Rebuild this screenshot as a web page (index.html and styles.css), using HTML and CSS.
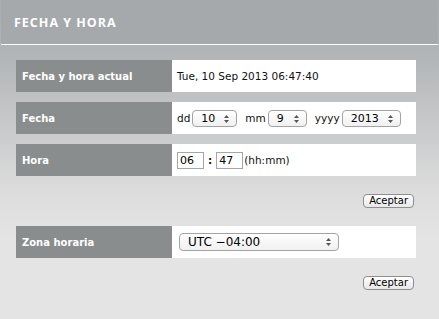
FILE: index.html
```html
<!DOCTYPE html>
<html lang="es">
<head>
    <meta charset="UTF-8">
    <title>Fecha y hora</title>
    <link rel="stylesheet" href="styles.css">
</head>
<body>
    <div class="panel">
        <h1 class="title">FECHA Y HORA</h1>
        <div class="content">
            <div class="row">
                <div class="label">Fecha y hora actual</div>
                <div class="value">Tue, 10 Sep 2013 06:47:40</div>
            </div>
            <div class="row">
                <div class="label">Fecha</div>
                <div class="value">
                    <span class="unit">dd</span>
                    <span class="select-wrap sel-dd">
                        <select><option>10</option></select>
                        <svg class="arrows" width="5" height="8" viewBox="0 0 5 8"><path d="M0 3 L2.5 0 L5 3 Z M0 5 L2.5 8 L5 5 Z" fill="#555"/></svg>
                    </span>
                    <span class="unit">mm</span>
                    <span class="select-wrap sel-mm">
                        <select><option>9</option></select>
                        <svg class="arrows" width="5" height="8" viewBox="0 0 5 8"><path d="M0 3 L2.5 0 L5 3 Z M0 5 L2.5 8 L5 5 Z" fill="#555"/></svg>
                    </span>
                    <span class="unit">yyyy</span>
                    <span class="select-wrap sel-yy">
                        <select><option>2013</option></select>
                        <svg class="arrows" width="5" height="8" viewBox="0 0 5 8"><path d="M0 3 L2.5 0 L5 3 Z M0 5 L2.5 8 L5 5 Z" fill="#555"/></svg>
                    </span>
                </div>
            </div>
            <div class="row">
                <div class="label">Hora</div>
                <div class="value">
                    <input type="text" class="time" value="06">
                    <span class="colon">:</span>
                    <input type="text" class="time" value="47">
                    <span class="hint">(hh:mm)</span>
                </div>
            </div>
            <div class="actions">
                <button>Aceptar</button>
            </div>
            <div class="row">
                <div class="label">Zona horaria</div>
                <div class="value zone">
                    <span class="select-wrap sel-zone">
                        <select><option>UTC −04:00</option></select>
                        <svg class="arrows" width="5" height="8" viewBox="0 0 5 8"><path d="M0 3 L2.5 0 L5 3 Z M0 5 L2.5 8 L5 5 Z" fill="#555"/></svg>
                    </span>
                </div>
            </div>
            <div class="actions">
                <button>Aceptar</button>
            </div>
        </div>
    </div>
</body>
</html>
```

FILE: styles.css
```css
body {
    margin: 0;
    font-family: "DejaVu Sans", Verdana, sans-serif;
    font-size: 10.5px;
    color: #111;
}
.panel {
    width: 439px;
    min-height: 319px;
    background: linear-gradient(#aaadaf 0, #b3b6b8 60px, #dcdcdc 190px, #e4e4e4 240px);
}
.title {
    margin: 0 1px;
    height: 44px;
    line-height: 46px;
    padding-left: 13px;
    font-family: "Open Sans", "DejaVu Sans", sans-serif;
    font-size: 12.5px;
    font-weight: bold;
    letter-spacing: 1px;
    color: #fff;
    background: #a6a9ab;
    border-bottom: 1px solid #fff;
}
.content {
    padding: 15px 23px 0 16px;
}
.row {
    display: flex;
    height: 32px;
    margin-bottom: 10px;
}
.label {
    width: 150px;
    padding-left: 6px;
    background: #8a8d8e;
    color: #fff;
    font-size: 10px;
    font-weight: bold;
    display: flex;
    align-items: center;
}
.value {
    flex: 1;
    background: #fff;
    padding-left: 5px;
    display: flex;
    align-items: center;
}
.unit {
    margin-right: 2px;
}
.select-wrap {
    position: relative;
    display: inline-block;
    margin-right: 8px;
}
.select-wrap select {
    appearance: none;
    -webkit-appearance: none;
    font-family: "DejaVu Sans", Verdana, sans-serif;
    font-size: 11px;
    height: 17px;
    padding: 0 0 0 8px;
    border: 1px solid #a3a3a3;
    border-radius: 4px;
    background: linear-gradient(#ffffff, #f0f0f0);
    color: #000;
    display: block;
}
.select-wrap .arrows {
    position: absolute;
    right: 8px;
    top: 5px;
}
.sel-dd select { width: 45px; }
.sel-mm select { width: 39px; }
.sel-yy select { width: 59px; }
.zone {
    padding-left: 7px;
}
.sel-zone select {
    width: 160px;
    height: 18px;
    font-size: 12px;
}
.time {
    width: 21px;
    height: 15px;
    padding: 0 2px;
    border: 1px solid #a6a6a6;
    font-family: "DejaVu Sans", Verdana, sans-serif;
    font-size: 11px;
}
.colon {
    font-weight: bold;
    margin: 0 4px;
}
.hint {
    margin-left: 1px;
}
.actions {
    display: flex;
    justify-content: flex-end;
    padding-right: 2px;
    margin-top: 18px;
    margin-bottom: 18px;
}
.actions button {
    font-family: "DejaVu Sans", Verdana, sans-serif;
    font-size: 10px;
    height: 14px;
    line-height: 12px;
    padding: 0 5px;
    border: 1px solid #8e8e8e;
    border-radius: 4px;
    background: linear-gradient(#ffffff, #e8e8e8);
    color: #000;
}
```
